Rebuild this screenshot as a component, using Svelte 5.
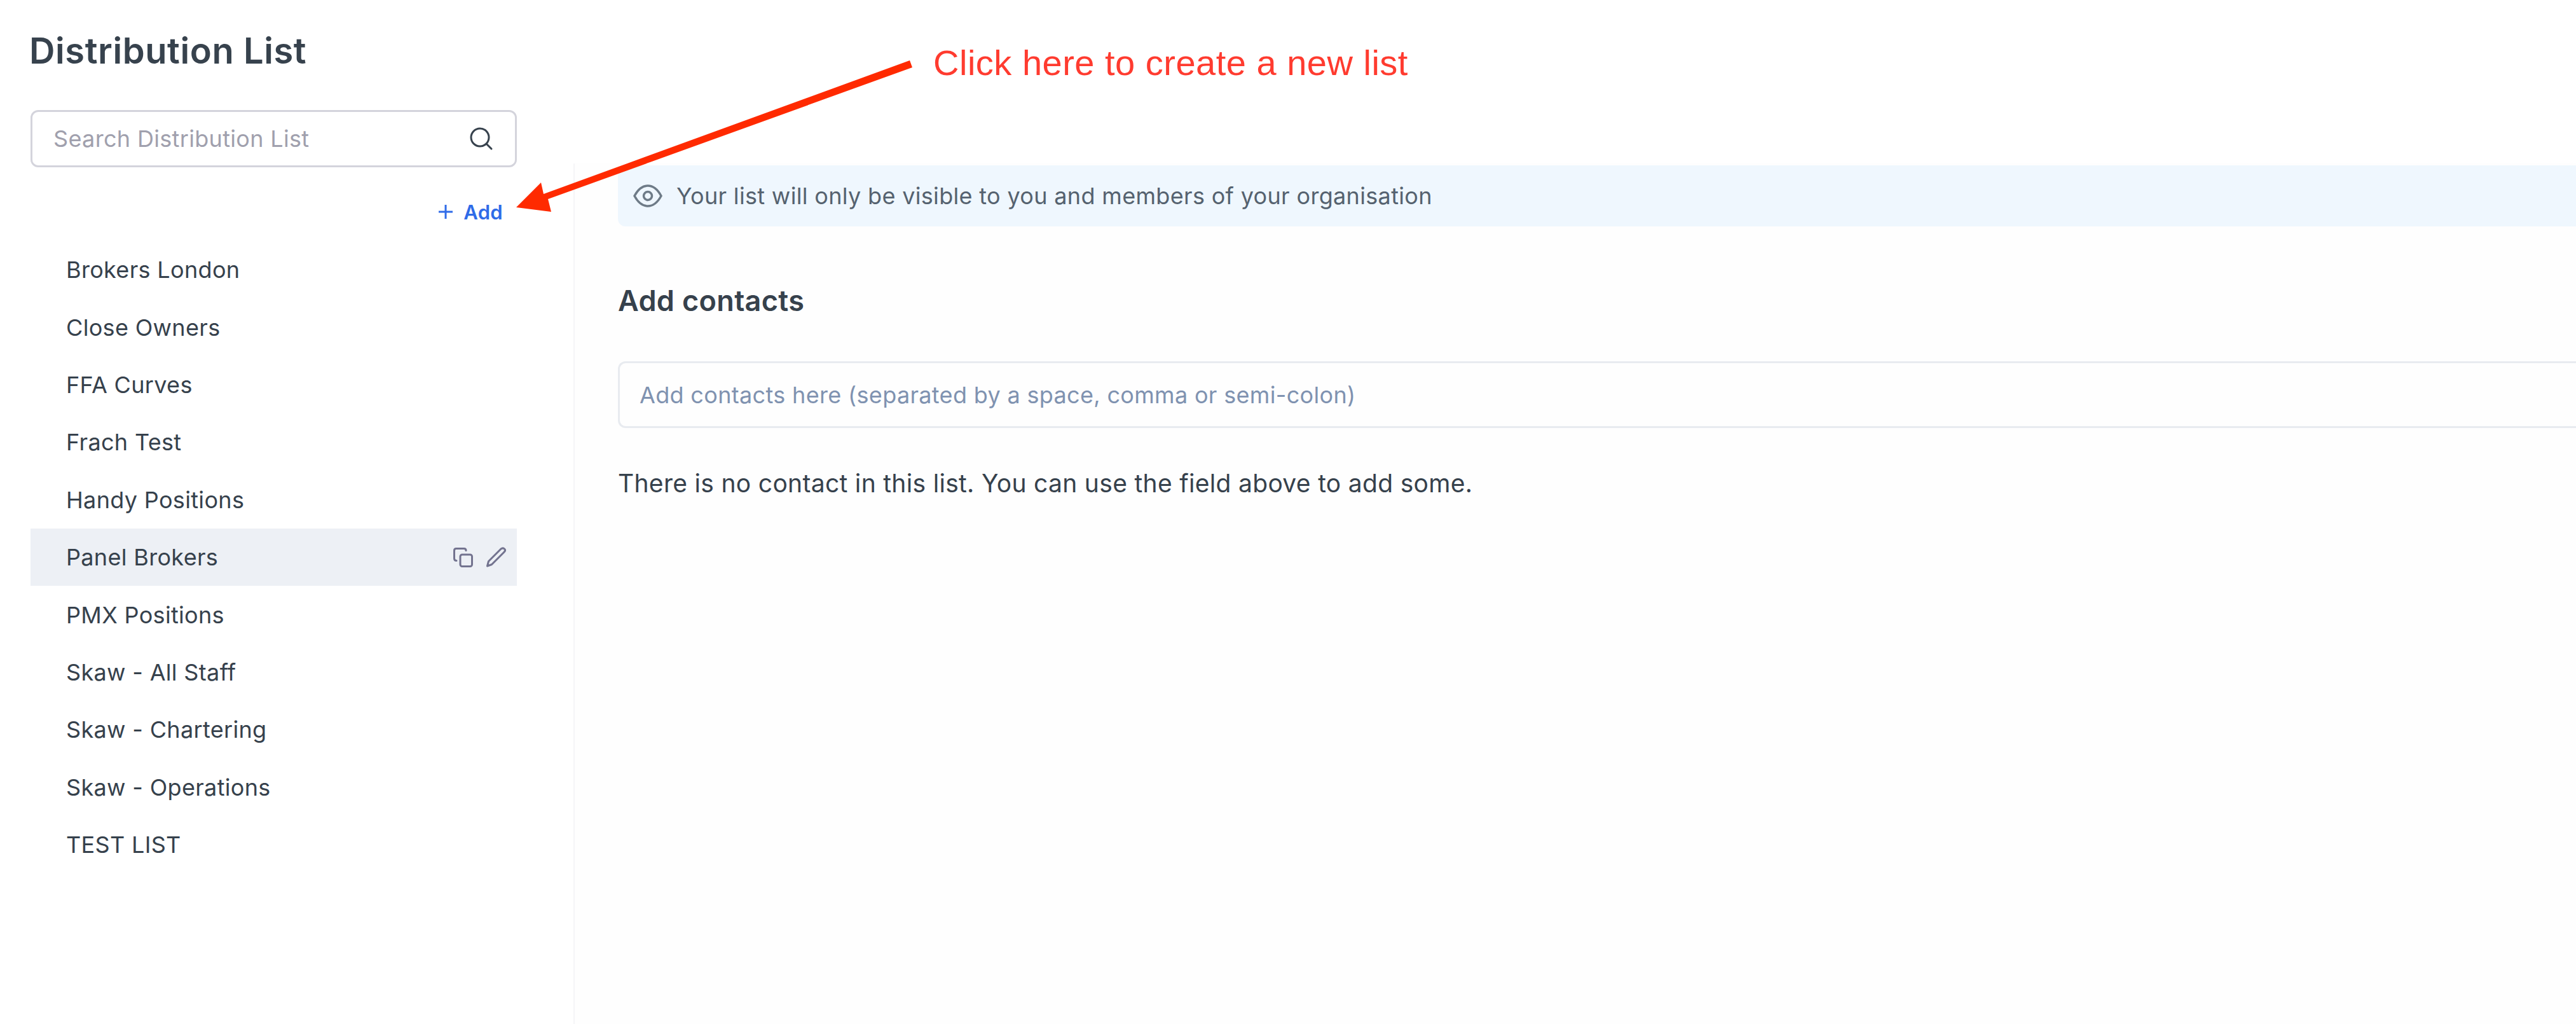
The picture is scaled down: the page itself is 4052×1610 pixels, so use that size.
<script>
  const lists = ['Brokers London','Close Owners','FFA Curves','Frach Test','Handy Positions','Panel Brokers','PMX Positions','Skaw - All Staff','Skaw - Chartering','Skaw - Operations','TEST LIST'];
  const active = 'Panel Brokers';
</script>

<div class="page">
  <aside class="sidebar">
    <h1>Distribution List</h1>
    <div class="search">
      <span class="search-ph">Search Distribution List</span>
      <svg class="search-icon" viewBox="0 0 40 40" fill="none" stroke="#37424d" stroke-width="3" stroke-linecap="round"><circle cx="18" cy="18" r="14"/><path d="M28.5 28.5L36 36"/></svg>
    </div>
    <div class="add">
      <svg viewBox="0 0 24 24" fill="none" stroke="#2f6be8" stroke-width="3"><path d="M12 1V23M1 12H23"/></svg>
      <span>Add</span>
    </div>
    <ul>
      {#each lists as item}
        <li class:active={item === active}>
          <span>{item}</span>
          {#if item === active}
            <span class="actions">
              <svg viewBox="0 0 32 32" fill="none" stroke="#73738f" stroke-width="3" stroke-linejoin="round" stroke-linecap="round"><path d="M6 21.5C3.5 21.5 2.5 20.5 2.5 18V5.5C2.5 3.5 3.5 2.5 5.5 2.5H18C20 2.5 21 3.5 21 5.5"/><rect x="12" y="12" width="18.5" height="18.5" rx="3"/></svg>
              <svg viewBox="0 0 32 32" fill="none" stroke="#73738f" stroke-width="3" stroke-linejoin="round" stroke-linecap="round"><path d="M2.5 30L4.5 22.5L24 3C26 1.5 28 1.5 29.5 3C31 4.5 30.5 6.5 29 8L9.5 27.5Z"/></svg>
            </span>
          {/if}
        </li>
      {/each}
    </ul>
  </aside>

  <main>
    <div class="banner">
      <svg viewBox="0 0 46 36" fill="none" stroke="#6e7b87" stroke-width="3.5"><path d="M2 18C8 7 15 2 23 2C31 2 38 7 44 18C38 29 31 34 23 34C15 34 8 29 2 18Z"/><circle cx="23" cy="18" r="6.5"/></svg>
      <span>Your list will only be visible to you and members of your organisation</span>
    </div>
    <h2>Add contacts</h2>
    <div class="contacts">Add contacts here (separated by a space, comma or semi-colon)</div>
    <p>There is no contact in this list. You can use the field above to add some.</p>
  </main>

  <svg class="arrow" viewBox="0 0 4052 1610">
    <polygon fill="#ff2a00" points="1431,95 1435,106 862,313 867,333 812,326 851,287 855,305"/>
  </svg>
  <div class="note">Click here to create a new list</div>
</div>

<style>
  :global(body) { margin: 0; background: #fff; }
  .page {
    position: relative;
    display: flex;
    width: 4052px;
    height: 1610px;
    overflow: hidden;
    font-family: Inter, "Noto Sans", sans-serif;
    letter-spacing: 0.33px;
    color: #36414c;
  }
  .sidebar {
    box-sizing: border-box;
    flex: 0 0 902px;
    padding: 40px 89px 0 46px;
  }
  h1 {
    margin: 0 0 53px;
    font-size: 56px;
    line-height: 80px;
    font-weight: 600;
    letter-spacing: 0.6px;
    color: #37424d;
  }
  .search {
    box-sizing: border-box;
    display: flex;
    align-items: center;
    justify-content: space-between;
    height: 90px;
    padding: 0 33px 0 33px;
    margin-left: 2px;
    border: 3px solid #d4d4dc;
    border-radius: 12px;
  }
  .search-ph { font-size: 36px; color: #a0a0ad; }
  .search-icon { width: 40px; height: 40px; }
  .add {
    display: flex;
    justify-content: flex-end;
    align-items: center;
    gap: 16px;
    height: 40px;
    margin: 50px 22px 26px 0;
    font-size: 31px;
    font-weight: 600;
    color: #2f6be8;
  }
  .add svg { width: 24px; height: 24px; }
  ul { list-style: none; margin: 0 0 0 2px; padding: 0; }
  li {
    display: flex;
    align-items: center;
    justify-content: space-between;
    height: 90.4px;
    padding: 0 17px 0 56px;
    font-size: 36px;
  }
  li.active { background: #edf0f5; }
  .actions { display: flex; gap: 20px; }
  .actions svg { width: 32px; height: 32px; }
  main {
    flex: 1;
    margin-top: 257px;
    padding: 3px 0 0 68px;
    border-left: 2px solid #f5f5f7;
    background: #fefefe;
  }
  .banner {
    display: flex;
    align-items: center;
    gap: 22px;
    height: 96px;
    padding-left: 24px;
    background: #eff7fe;
    border-radius: 12px 0 0 12px;
    font-size: 36px;
    color: #55626f;
  }
  .banner svg { width: 46px; height: 36px; }
  h2 {
    margin: 87px 0 0;
    font-size: 45px;
    line-height: 60px;
    font-weight: 600;
    letter-spacing: 0.35px;
    color: #36414c;
  }
  .contacts {
    box-sizing: border-box;
    display: flex;
    align-items: center;
    height: 105px;
    margin-top: 65px;
    padding-left: 31px;
    border: 3px solid #e8ebf0;
    border-right: 0;
    border-radius: 12px 0 0 12px;
    font-size: 36px;
    color: #7f92b0;
  }
  p {
    margin: 60px 0 0;
    font-size: 39px;
    line-height: 54px;
    letter-spacing: 0.31px;
    color: #36414c;
  }
  .arrow {
    position: absolute;
    inset: 0;
    width: 4052px;
    height: 1610px;
    pointer-events: none;
  }
  .note {
    position: absolute;
    left: 1468px;
    top: 65px;
    font-family: "Liberation Sans", Arial, sans-serif;
    font-size: 56px;
    line-height: 68px;
    letter-spacing: 0.5px;
    color: #ff3b2f;
  }
</style>
